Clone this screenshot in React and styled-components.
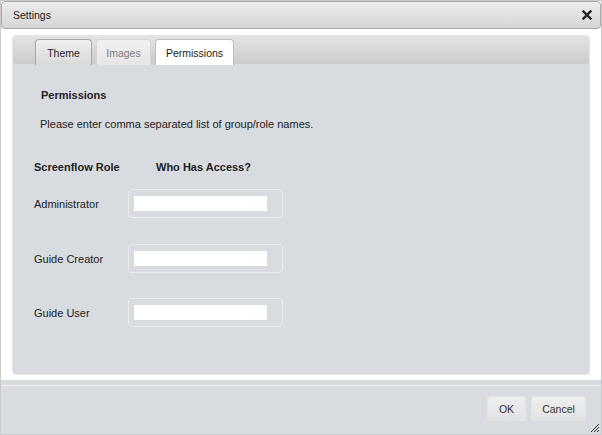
import React from "react";
import styled, { createGlobalStyle } from "styled-components";

const Global = createGlobalStyle`
  html, body { margin: 0; padding: 0; background: #ffffff; }
  body { font-family: "Liberation Sans", Arial, sans-serif; font-size: 11px; color: #222; }
  #root { width: 602px; height: 435px; }
`;

const Dialog = styled.div`
  box-sizing: border-box;
  width: 602px;
  height: 435px;
  border: 1px solid #c9c9c9;
  background: #ffffff;
  display: flex;
  flex-direction: column;
  position: relative;
`;

const TitleBar = styled.div`
  box-sizing: border-box;
  height: 28px;
  border: 1px solid #a9a9a9;
  border-radius: 4px;
  background: linear-gradient(#ebebeb, #d6d6d6);
  display: flex;
  align-items: center;
  justify-content: space-between;
  padding: 0 8px 0 11px;
  font-size: 10.5px;
  color: #222;
`;

const CloseIcon = styled.svg`
  width: 10px;
  height: 10px;
`;

const Content = styled.div`
  flex: 1;
  padding: 6px 11px 5px 11px;
  display: flex;
  flex-direction: column;
`;

const Tabs = styled.div`
  flex: 1;
  border: 1px solid #e2e4e8;
  border-radius: 4px;
  background: #d8dbe0;
  display: flex;
  flex-direction: column;
`;

const TabBar = styled.div`
  height: 28px;
  box-sizing: border-box;
  padding: 3px 0 0 22px;
  background: linear-gradient(#e4e4e4, #cbcbcb);
  border-radius: 3px;
  display: flex;
  align-items: flex-end;
  gap: 4px;
`;

const Tab = styled.div`
  box-sizing: border-box;
  width: ${(p) => p.$w}px;
  height: 26px;
  margin-bottom: -1px;
  border: 1px solid ${(p) => (p.$active ? "#bdbdbd" : p.$muted ? "#d6d6d6" : "#a8a8a8")};
  border-bottom: none;
  border-radius: 4px 4px 0 0;
  background: ${(p) =>
    p.$active ? "#ffffff" : p.$muted ? "linear-gradient(#f0f0f0, #e6e6e6)" : "linear-gradient(#efefef, #d9d9d9)"};
  color: ${(p) => (p.$muted ? "#7e7e7e" : "#222")};
  display: flex;
  align-items: center;
  justify-content: center;
  font-size: 10.5px;
`;

const Body = styled.div`
  padding: 24px 0 0 21px;
  display: flex;
  flex-direction: column;
`;

const Heading = styled.div`
  font-weight: bold;
  padding-left: 7px;
  line-height: 14px;
`;

const Hint = styled.div`
  margin-top: 15px;
  padding-left: 6px;
  line-height: 14px;
`;

const Grid = styled.div`
  margin-top: 29px;
  display: grid;
  grid-template-columns: 94px auto;
  align-items: center;
`;

const ColHead = styled.div`
  font-weight: bold;
  line-height: 14px;
  white-space: nowrap;
  padding-left: ${(p) => p.$pl || 0}px;
  margin-bottom: 15px;
`;

const Label = styled.div`
  line-height: 14px;
  margin-bottom: ${(p) => p.$mb}px;
`;

const FieldBox = styled.div`
  box-sizing: border-box;
  width: 155px;
  height: 29px;
  border: 1px solid #eaecef;
  border-radius: 4px;
  padding: 6px 0 0 5px;
  margin-bottom: ${(p) => p.$mb}px;
`;

const Input = styled.div`
  width: 133px;
  height: 15px;
  background: #ffffff;
`;

const Footer = styled.div`
  height: 54px;
  background: #d8dbe0;
  position: relative;
  display: flex;
  flex-direction: column;
`;

const FooterLine = styled.div`
  margin-top: 5px;
  height: 1px;
  background: #eef0f2;
`;

const ButtonRow = styled.div`
  display: flex;
  justify-content: flex-end;
  gap: 5px;
  padding: 10px 15px 0 0;
`;

const Button = styled.div`
  box-sizing: border-box;
  width: ${(p) => p.$w}px;
  height: 25px;
  border: 1px solid #e3e5e8;
  border-radius: 3px;
  background: linear-gradient(#efefef, #e2e2e2);
  color: #333;
  display: flex;
  align-items: center;
  justify-content: center;
  font-size: 10.5px;
`;

const Grip = styled.svg`
  position: absolute;
  right: 1px;
  bottom: 1px;
  width: 12px;
  height: 12px;
`;

export default function App() {
  const rows = [
    { name: "Administrator", mb: 26 },
    { name: "Guide Creator", mb: 25 },
    { name: "Guide User", mb: 0 },
  ];
  return (
    <>
      <Global />
      <Dialog>
        <TitleBar>
          <span>Settings</span>
          <CloseIcon viewBox="0 0 10 10">
            <path d="M1.5 1.5 L8.5 8.5 M8.5 1.5 L1.5 8.5" stroke="#222" strokeWidth="2.4" strokeLinecap="square" />
          </CloseIcon>
        </TitleBar>
        <Content>
          <Tabs>
            <TabBar>
              <Tab $w={57}>Theme</Tab>
              <Tab $w={55} $muted>Images</Tab>
              <Tab $w={79} $active>Permissions</Tab>
            </TabBar>
            <Body>
              <Heading>Permissions</Heading>
              <Hint>Please enter comma separated list of group/role names.</Hint>
              <Grid>
                <ColHead>Screenflow Role</ColHead>
                <ColHead $pl={28}>Who Has Access?</ColHead>
                {rows.map((r) => (
                  <React.Fragment key={r.name}>
                    <Label $mb={r.mb}>{r.name}</Label>
                    <FieldBox $mb={r.mb}>
                      <Input />
                    </FieldBox>
                  </React.Fragment>
                ))}
              </Grid>
            </Body>
          </Tabs>
        </Content>
        <Footer>
          <FooterLine />
          <ButtonRow>
            <Button $w={39}>OK</Button>
            <Button $w={55}>Cancel</Button>
          </ButtonRow>
          <Grip viewBox="0 0 12 12">
            <path d="M11 3 L3 11 M11 6 L6 11 M11 9 L9 11" stroke="#333" strokeWidth="1" />
          </Grip>
        </Footer>
      </Dialog>
    </>
  );
}
